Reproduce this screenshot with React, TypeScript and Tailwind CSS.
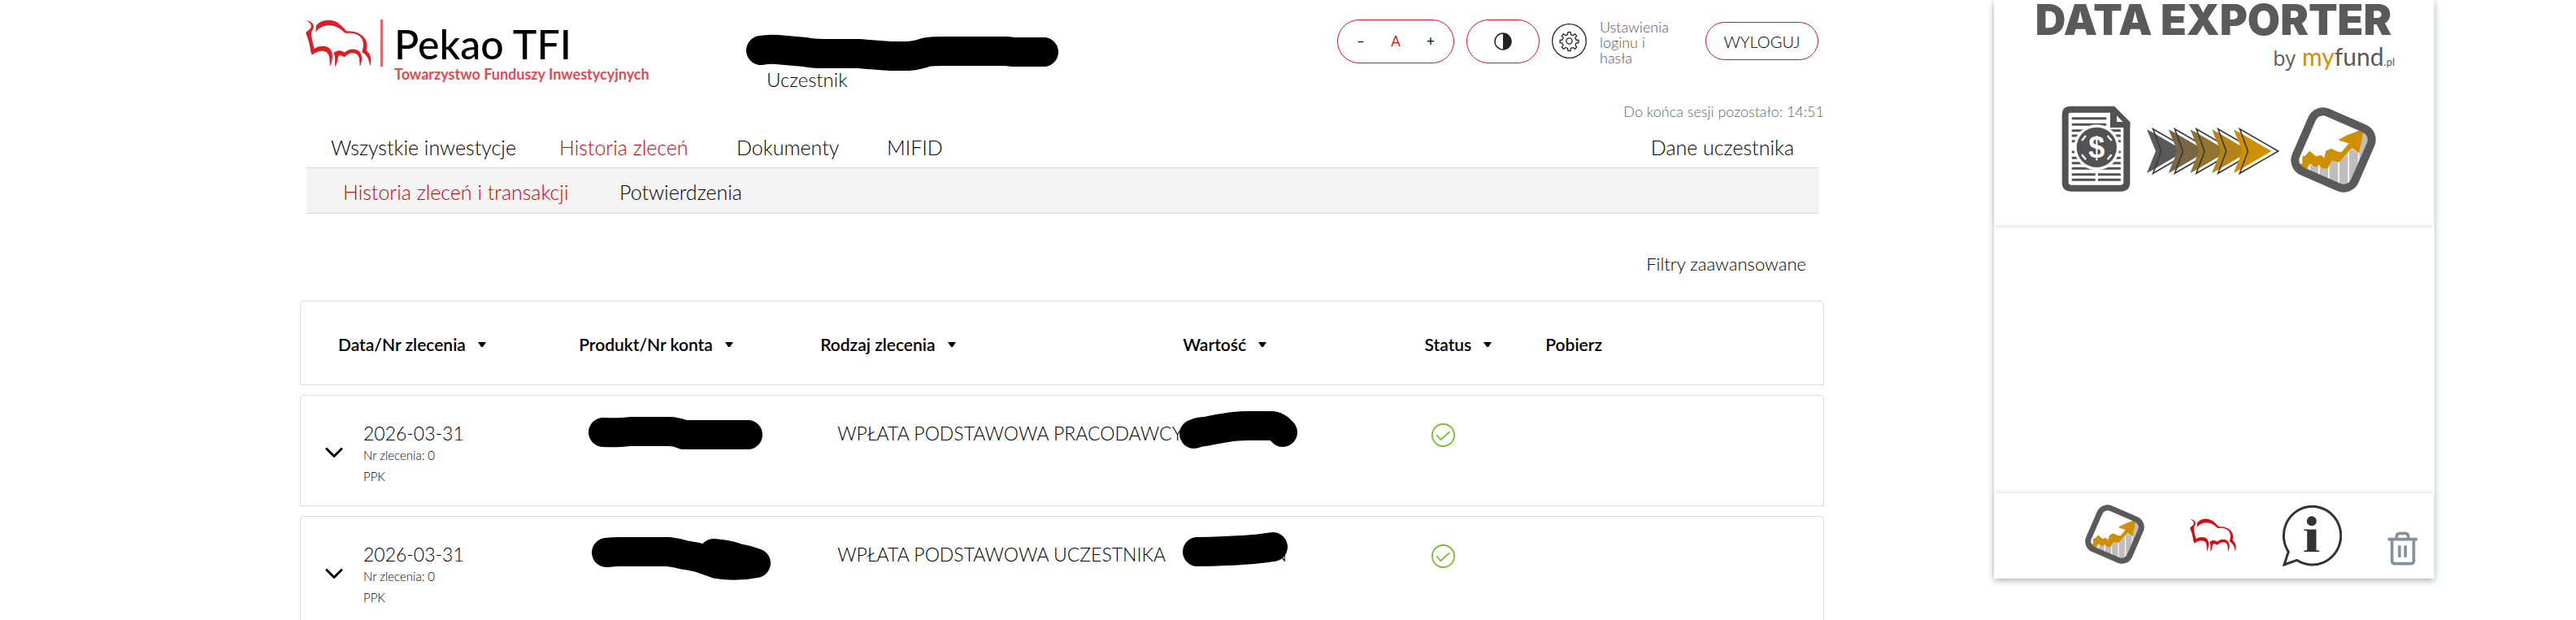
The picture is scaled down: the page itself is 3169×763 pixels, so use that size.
import { ReactNode } from 'react';

interface Order {
  date: string;
  number: string;
  register: string;
  type: string;
  product: ReactNode;
  value: ReactNode;
}

const arrowColors = ['#5a5a5a', '#7a6645', '#93742f', '#b58318', '#cf9000'];

const navLinks = [
  { label: 'Wszystkie inwestycje', width: 'w-[281px]' },
  { label: 'Historia zleceń', width: 'w-[218px]', active: true },
  { label: 'Dokumenty', width: 'w-[185px]' },
  { label: 'MIFID', width: 'w-[120px]' },
];

const columns = [
  { label: 'Data/Nr zlecenia', pad: 'pl-[46px]', sortable: true },
  { label: 'Produkt/Nr konta', pad: '', sortable: true },
  { label: 'Rodzaj zlecenia', pad: '', sortable: true },
  { label: 'Wartość', pad: '', sortable: true },
  { label: 'Status', pad: '', sortable: true },
  { label: 'Pobierz', pad: '', sortable: false },
];

const cell = 'border-y border-[#d9d9d9] p-0 text-left align-top';
const firstCell = 'border-l rounded-tl-[5px]';
const lastCell = 'border-r rounded-tr-[5px]';

function Bison({ className }: { className: string }) {
  return (
    <svg viewBox="45 70 246 176" className={className} fill="currentColor" aria-hidden="true">
      <path d="M47 73C62 76 76 84 75 98C74 108 65 114 66 125C68 145 73 160 77 179C95 167 122 165 136 179C149 193 147 222 136 245C134 228 138 204 124 193C108 182 88 188 69 202C62 190 62 170 57 154C54 140 47 128 46 120C52 110 66 106 66 95C66 86 58 80 47 73Z" />
      <path d="M82 117C84 105 83 98 85 91C98 77 115 71 133 72C168 74 180 96 198 113C232 112 257 124 269 145C276 158 274 172 272 186C290 199 292 222 286 245C282 226 280 206 256 192C258 178 264 164 257 146C248 126 228 119 193 121C176 106 160 92 132 92C108 92 94 103 82 117Z" />
      <path d="M149 195C164 181 180 185 190 193C205 179 232 175 246 190C260 207 255 230 248 245C245 228 250 208 234 198C217 191 202 198 190 211C180 204 172 202 167 207C163 220 164 235 155 245C153 227 159 210 149 195Z" />
    </svg>
  );
}

function ChartTile({ className }: { className: string }) {
  return (
    <svg viewBox="893 50 314 314" className={className} aria-hidden="true">
      <path d="M925 272 960 262 1000 265 1028 275 1045 245 1075 250 1118 203 1143 220 1160 135 1192 150 1115 345 1085 350 925 285Z" fill="#c0bdbe" />
      <path d="M962 240V350M997 240V350M1033 240V350M1070 230V350M1106 190V350M1143 180V350" stroke="#fff" strokeWidth="5" />
      <path
        d="M926 262 938 258 938 232 948 230 963 213 985 233 1003 228 1018 240 1024 212 1042 204 1070 217 1082 216 1110 182 1072 170 1100 155 1160 132 1143 216 1118 197 1072 250 1043 245 1028 273 1010 272 998 260 985 268 965 256 948 274 930 272Z"
        fill="#cf9000"
        stroke="#cf9000"
        strokeWidth="4"
        strokeLinejoin="round"
      />
      <rect x="932" y="89" width="236" height="236" rx="45" transform="rotate(23.5 1050 207)" fill="none" stroke="#5a5a5a" strokeWidth="30" />
    </svg>
  );
}

function ExporterArt() {
  return (
    <svg viewBox="50 36 804 330" className="h-[110px] w-[268px]" aria-hidden="true">
      <path d="M84 53H240L291 104V322Q291 344 269 344H86Q64 344 64 322V74Q64 53 84 53Z" fill="#fff" stroke="#525252" strokeWidth="24" />
      <path d="M230 45 244 41 303 102V120H230Z" fill="#525252" />
      <path d="M254 76V99H277Z" fill="#fff" />
      <path
        d="M92 86H212M92 109H212M92 131H265M92 150H265M92 170H265M92 210H265M92 232H265M92 251H265M92 271H265M92 293H265M92 313H265"
        stroke="#525252"
        strokeWidth="9"
        strokeLinecap="round"
      />
      <path d="M180 270V330" stroke="#fff" strokeWidth="9" />
      <circle cx="180" cy="193" r="84" fill="#fff" />
      <circle cx="180" cy="193" r="74" fill="#525252" />
      <path d="M125 168 140 150M220 150 235 168M125 220 140 238M220 238 235 220" stroke="#fff" strokeWidth="7" />
      <text x="180" y="232" textAnchor="middle" fontFamily="Liberation Sans" fontWeight="700" fontSize="108" fill="#fff">$</text>
      {arrowColors.map((color, i) => (
        <g key={color} transform={`translate(${i * 80} 0)`}>
          <path d="M388 125 530 207 388 289 418 207Z" fill="#fff" />
          <path d="M365 127 388 139 505 207 388 276 365 288 398 207Z" fill={color} />
          <path d="M388 125 530 207 388 289 418 207Z" fill="none" stroke="#3a3a3a" strokeWidth="5" />
        </g>
      ))}
    </svg>
  );
}

function GearIcon() {
  return (
    <svg viewBox="0 0 43 43" className="size-[43px]" fill="none" stroke="#222" aria-hidden="true">
      <circle cx="21.5" cy="21.5" r="20.8" strokeWidth="1.3" />
      <circle cx="21.5" cy="21.5" r="3.6" strokeWidth="1.3" />
      <path
        d="M19.9 10.6h3.2l.5 3.1 2.3 1 2.6-1.9 2.2 2.3-1.8 2.6 1 2.3 3.1.5v3.1l-3.1.6-1 2.2 1.8 2.6-2.2 2.3-2.6-1.8-2.3.9-.5 3.1h-3.2l-.5-3.1-2.3-.9-2.6 1.8-2.2-2.3 1.8-2.6-1-2.2-3.1-.6v-3.1l3.1-.5 1-2.3-1.8-2.6 2.2-2.3 2.6 1.9 2.3-1z"
        strokeWidth="1.3"
        strokeLinejoin="round"
      />
    </svg>
  );
}

function Marker({ d, box, className }: { d: string; box: string; className: string }) {
  return (
    <svg viewBox={box} className={className} fill="none" stroke="#000" strokeWidth="36" strokeLinecap="round" strokeLinejoin="round" aria-hidden="true">
      <path d={d} />
    </svg>
  );
}

const orders: Order[] = [
  {
    date: '2026-03-31',
    number: 'Nr zlecenia: 0',
    register: 'PPK',
    type: 'WPŁATA PODSTAWOWA PRACODAWCY',
    product: <Marker box="712 486 240 80" className="h-20 w-[240px]" d="M742 531Q760 532 776 530H822Q832 530 841 534H920" />,
    value: <Marker box="1440 486 170 80" className="-ml-[15px] h-20 w-[170px]" d="M1469 533Q1476 530 1483 530Q1520 522 1540 523H1564Q1571 523 1578 531" />,
  },
  {
    date: '2026-03-31',
    number: 'Nr zlecenia: 0',
    register: 'PPK',
    type: 'WPŁATA PODSTAWOWA UCZESTNIKA',
    product: <Marker box="712 635 250 90" className="h-[90px] w-[250px]" d="M746 679Q755 678 763 678H822Q832 679 842 682Q856 684 862 686L882 693Q905 697 930 692Q920 688 908 686Q895 681 878 680" />,
    value: (
      <div className="relative w-[128px] pt-[32px] text-right text-[23px] leading-[28px]">
        PLN
        <Marker box="1440 635 170 80" className="absolute top-0 -left-[15px] h-20 w-[170px]" d="M1473 678Q1490 678 1507 677Q1540 676 1566 672" />
      </div>
    ),
  },
];

function SiteHeader() {
  return (
    <header className="flex h-[124px] items-start pt-6 pr-[7px] pl-[7px]">
      <a href="#" aria-label="Pekao TFI" className="flex w-[542px] items-start">
        <Bison className="h-[58px] w-[81px] text-[#dc1f26]" />
        <span className="ml-[11px] h-[58px] w-[3px] bg-[#e4666b]" />
        <span className="ml-[14px] font-[Lato]">
          <span className="block text-[50px] leading-[60px] font-medium text-black">Pekao TFI</span>
          <span className="block text-[18px] leading-[14px] font-bold text-[#e04a50]">Towarzystwo Funduszy Inwestycyjnych</span>
        </span>
      </a>
      <div className="pt-[18px]">
        <Marker box="918 42 384 46" className="h-[46px] w-[384px]" d="M936 62Q946 60 956 61L990 64Q1000 66 1013 66H1057Q1080 68 1097 69H1117Q1130 68 1140 64Q1148 63 1160 63H1238L1247 64H1284" />
        <p className="pl-[25px] text-[24px] leading-[20px]">Uczestnik</p>
      </div>
      <div className="ml-auto flex items-start">
        <div className="mr-[15px] flex h-[54px] w-[144px] items-center justify-between rounded-full border border-[#d8151c] px-[23px] text-[17px] font-normal">
          <button aria-label="Zmniejsz tekst">–</button>
          <button className="text-[#d8151c]">A</button>
          <button aria-label="Powiększ tekst">+</button>
        </div>
        <button aria-label="Kontrast" className="mr-[15px] flex h-[54px] w-[90px] items-center justify-center rounded-full border border-[#d8151c]">
          <svg viewBox="0 0 22 22" className="size-[22px]" aria-hidden="true">
            <circle cx="11" cy="11" r="10" fill="none" stroke="#222" strokeWidth="1.5" />
            <path d="M11 1a10 10 0 0 1 0 20z" fill="#222" />
          </svg>
        </button>
        <a href="#" className="mr-[40px] flex items-start gap-4 text-[18px] leading-[19px] text-[#555]">
          <span className="mt-[5px]">
            <GearIcon />
          </span>
          <span className="w-[90px]">Ustawienia loginu i hasła</span>
        </a>
        <button className="mt-[3px] h-[47px] w-[139px] rounded-full border border-[#d8151c] text-[20px]">WYLOGUJ</button>
      </div>
    </header>
  );
}

function OrdersTable() {
  return (
    <table className="w-full table-fixed border-separate border-spacing-x-0 border-spacing-y-3">
      <colgroup>
        <col className="w-[18.3%]" />
        <col className="w-[15.84%]" />
        <col className="w-[23.79%]" />
        <col className="w-[15.86%]" />
        <col className="w-[7.93%]" />
        <col />
      </colgroup>
      <thead>
        <tr>
          {columns.map((col, i) => (
            <th key={col.label} scope="col" className={`${cell} ${i === 0 ? firstCell : ''} ${i === columns.length - 1 ? lastCell : ''}`}>
              <div className={`flex h-[102px] items-center gap-[15px] pt-1 text-[21px] font-semibold ${col.pad}`}>
                {col.label}
                {col.sortable && (
                  <svg viewBox="0 0 10 6" className="h-[6px] w-[10px]" aria-hidden="true">
                    <path d="M0 0h10L6 6H4z" />
                  </svg>
                )}
              </div>
            </th>
          ))}
        </tr>
      </thead>
      <tbody>
        {orders.map((order) => (
          <tr key={order.type}>
            <td className={`${cell} ${firstCell}`}>
              <div className="flex h-[135px] pl-[30px]">
                <button aria-label="Rozwiń" className="mr-[25px] self-center pt-1">
                  <svg viewBox="0 0 22 12" className="h-3 w-[22px]" fill="none" stroke="#000" strokeWidth="3" strokeLinecap="round" strokeLinejoin="round" aria-hidden="true">
                    <path d="M2 1.500 11 10.500 20 1.500" />
                  </svg>
                </button>
                <div className="pt-[32px]">
                  <p className="text-[23px] leading-[28px]">{order.date}</p>
                  <p className="text-[15px] leading-[26px]">{order.number}</p>
                  <p className="text-[15px] leading-[26px]">{order.register}</p>
                </div>
              </div>
            </td>
            <td className={cell}>{order.product}</td>
            <td className={cell}>
              <p className="pt-[32px] pl-[21px] text-[23px] leading-[28px] whitespace-nowrap">{order.type}</p>
            </td>
            <td className={`${cell} relative`}>{order.value}</td>
            <td className={cell}>
              <svg viewBox="0 0 29 29" className="mt-[34px] ml-2 size-[29px]" fill="none" stroke="#6fb61f" strokeWidth="1.6" role="img" aria-label="Zrealizowane">
                <circle cx="14.500" cy="14.500" r="13.6" />
                <path d="m6.300 14.200 5 6 11-9.800" />
              </svg>
            </td>
            <td className={`${cell} ${lastCell}`}></td>
          </tr>
        ))}
      </tbody>
    </table>
  );
}

function ExporterPanel() {
  return (
    <aside className="flex h-[712px] w-[542px] shrink-0 flex-col shadow-[0_3px_8px_0_rgba(70,80,80,0.4)]">
      <div className="mr-[2px] h-[277px] bg-white pt-[2px] pr-[47px] pl-[47px] shadow-[0_2px_5px_rgba(0,0,0,0.1)]">
        <h2 className="text-center font-[Inter] text-[52px] leading-[46px] font-black whitespace-nowrap text-[#5a5a5a]">DATA EXPORTER</h2>
        <p className="flex items-baseline justify-end text-[30px] leading-[42px] font-normal text-[#5a5a5a]">
          <span className="mr-2 font-['Open_Sans'] text-[25px]">by</span>
          <span className="text-[#cf9000]">my</span>
          <span>fund</span>
          <span className="text-[13px]">.pl</span>
        </p>
        <div className="flex items-center justify-between pt-[32px] pr-[23px] pl-[36px]">
          <ExporterArt />
          <ChartTile className="size-[105px]" />
        </div>
      </div>
      <div className="flex-1" />
      <div className="mr-[2px] flex h-[105px] items-start justify-end gap-14 bg-white pt-[14px] pr-[19px] shadow-[0_-2px_5px_rgba(0,0,0,0.1)]">
        <button aria-label="myFund">
          <ChartTile className="size-[73px]" />
        </button>
        <button aria-label="Pekao TFI" className="pt-[17px]">
          <Bison className="h-[41px] w-[57px] text-[#d60b12]" />
        </button>
        <button aria-label="Informacje">
          <svg viewBox="772 62 223 227" className="h-[76px] w-[74px]" aria-hidden="true">
            <path d="M797 236A106 108 0 1 1 828 267L781 284Z" fill="none" stroke="#333" strokeWidth="9" />
            <circle cx="883" cy="122" r="18" fill="#333" />
            <path d="M854 153H900V230L912 232V236H854V232L866 230V159L854 157Z" fill="#333" />
          </svg>
        </button>
        <button aria-label="Usuń" className="pt-[33px]">
          <svg viewBox="1160 161 112 125" className="h-[42px] w-[37px]" fill="none" stroke="#84919a" strokeWidth="11" strokeLinecap="round" aria-hidden="true">
            <path d="M1166 189H1267M1194 186V180Q1194 167 1207 167H1225Q1238 167 1238 180V186M1177 191V270Q1177 280 1187 280H1248Q1258 280 1258 270V191M1205 217V252M1227 217V252" />
          </svg>
        </button>
      </div>
    </aside>
  );
}

export default function App() {
  return (
    <div className="flex h-screen items-start gap-[209px] overflow-hidden bg-white pr-[174px] pl-[369px] font-[Lato] font-light text-black">
      <main className="flex-1">
        <SiteHeader />
        <p className="text-right text-[18px] leading-[26px] text-[#666]">Do końca sesji pozostało: 14:51</p>
        <nav className="mr-[7px] ml-2 text-[25px] leading-[28px]">
          <div className="flex h-[57px] items-end border-b border-[#d9d9d9] pr-[30px] pb-[11px] pl-[30px]">
            {navLinks.map((link) => (
              <a key={link.label} href="#" className={`${link.width} ${link.active ? 'text-[#d0000a]' : ''}`}>
                {link.label}
              </a>
            ))}
            <a href="#" className="ml-auto">Dane uczestnika</a>
          </div>
          <div className="flex h-[56px] items-center border-b border-[#d9d9d9] bg-[#f3f3f3] pt-[3px] pl-[45px]">
            <a href="#" className="w-[340px] text-[#d0000a]">Historia zleceń i transakcji</a>
            <a href="#">Potwierdzenia</a>
          </div>
        </nav>
        <div className="flex justify-end pt-[48px] pr-[22px] pb-[19px]">
          <button className="text-[22px] leading-[28px]">Filtry zaawansowane</button>
        </div>
        <OrdersTable />
      </main>
      <ExporterPanel />
    </div>
  );
}
